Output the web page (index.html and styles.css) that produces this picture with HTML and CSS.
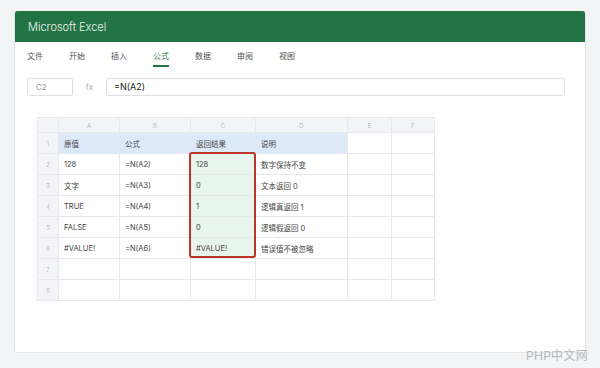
FILE: index.html
```html
<!DOCTYPE html>
<html lang="zh">
<head>
  <meta charset="UTF-8" />
  <title>Microsoft Excel - N函数</title>
  <link rel="stylesheet" href="styles.css">
</head>
<body>

  <div class="window">
    <div class="titlebar">Microsoft Excel</div>

    <!-- Ribbon tabs -->
    <div class="tabs">
      <span class="tab">文件</span>
      <span class="tab">开始</span>
      <span class="tab">插入</span>
      <span class="tab active">公式</span>
      <span class="tab">数据</span>
      <span class="tab">审阅</span>
      <span class="tab">视图</span>
    </div>

    <!-- Formula bar -->
    <div class="formula-bar">
      <div class="name-box">C2</div>
      <div class="fx">fx</div>
      <div class="formula-input">=N(A2)</div>
    </div>

    <div class="sheet">
      <table class="grid">
        <colgroup>
          <col class="c-num"><col class="c-a"><col class="c-b"><col class="c-c"><col class="c-d"><col class="c-e"><col class="c-f">
        </colgroup>
        <tr class="col-head">
          <th></th><th>A</th><th>B</th><th>C</th><th>D</th><th>E</th><th>F</th>
        </tr>
        <tr class="title-row">
          <th>1</th><td>原值</td><td>公式</td><td>返回结果</td><td>说明</td><td class="plain"></td><td class="plain"></td>
        </tr>
        <tr>
          <th>2</th><td>128</td><td>=N(A2)</td><td class="result">128</td><td>数字保持不变</td><td></td><td></td>
        </tr>
        <tr>
          <th>3</th><td>文字</td><td>=N(A3)</td><td class="result">0</td><td>文本返回 0</td><td></td><td></td>
        </tr>
        <tr>
          <th>4</th><td>TRUE</td><td>=N(A4)</td><td class="result">1</td><td>逻辑真返回 1</td><td></td><td></td>
        </tr>
        <tr>
          <th>5</th><td>FALSE</td><td>=N(A5)</td><td class="result">0</td><td>逻辑假返回 0</td><td></td><td></td>
        </tr>
        <tr>
          <th>6</th><td>#VALUE!</td><td>=N(A6)</td><td class="result">#VALUE!</td><td>错误值不被忽略</td><td></td><td></td>
        </tr>
        <tr>
          <th>7</th><td></td><td></td><td></td><td></td><td></td><td></td>
        </tr>
        <tr>
          <th>8</th><td></td><td></td><td></td><td></td><td></td><td></td>
        </tr>
      </table>
      <!-- highlight around C2:C6 -->
      <div class="highlight"></div>
    </div>
  </div>

  <div class="watermark">PHP中文网</div>

</body>
</html>
```

FILE: styles.css
```css
/* General styling */
body {
  font-family: 'Inter', 'Noto Sans CJK SC', sans-serif;
  margin: 0;
  padding: 0;
  background: #f3f4f6;
  color: #333;
  overflow: hidden;
}

.window {
  margin: 11px 14px 0;
  height: 342px;
  box-sizing: border-box;
  background: #fff;
  border: 1px solid #e2e4e7;
  border-top: none;
  border-radius: 3px;
  overflow: hidden;
}

.titlebar {
  height: 31px;
  box-sizing: border-box;
  padding: 2px 0 0 13px;
  background: #237445;
  color: #eef5f0;
  font-size: 11px;
  font-weight: 300;
  line-height: 29px;
}

/* Ribbon tabs */
.tabs {
  display: flex;
  gap: 26px;
  padding: 9px 0 0 12px;
  height: 27px;
  box-sizing: border-box;
}

.tab {
  font-size: 8px;
  color: #555;
  line-height: 11px;
  width: 16px;
  height: 16px;
  box-sizing: border-box;
  white-space: nowrap;
}

.tab.active {
  color: #2d7a4c;
  border-bottom: 2px solid #237445;
}

/* Formula bar */
.formula-bar {
  display: flex;
  align-items: center;
  margin-top: 9px;
  padding: 0 20px 0 12px;
  height: 18px;
}

.name-box {
  width: 46px;
  height: 18px;
  box-sizing: border-box;
  border: 1px solid #dcdfe3;
  border-radius: 2px;
  font-size: 8px;
  color: #999;
  line-height: 16px;
  padding-left: 8px;
}

.fx {
  width: 33px;
  font-size: 8px;
  color: #aaa;
  text-align: center;
}

.formula-input {
  flex: 1;
  height: 18px;
  box-sizing: border-box;
  border: 1px solid #dcdfe3;
  border-radius: 2px;
  font-size: 9px;
  color: #222;
  line-height: 16px;
  padding-left: 7px;
}

/* Sheet */
.sheet {
  position: relative;
  margin: 21px 0 0 22px;
  width: 398px;
}

.grid {
  border-collapse: collapse;
  table-layout: fixed;
  width: 397px;
  font-size: 7.5px;
}

.c-num { width: 21px; }
.c-a { width: 61px; }
.c-b { width: 71px; }
.c-c { width: 65px; }
.c-d { width: 92px; }
.c-e { width: 44px; }
.c-f { width: 43px; }

.grid td,
.grid th {
  border: 1px solid #e6e8eb;
  height: 20px;
  padding: 0 0 0 5px;
  text-align: left;
  font-weight: normal;
  white-space: nowrap;
  color: #444;
}

.grid th {
  background: #f2f4f7;
  color: #aaa;
  font-size: 6px;
  font-weight: 300;
  text-align: center;
  padding: 0;
}

.col-head th {
  height: 14px;
}

.title-row td {
  background: #dde9f8;
}

.title-row td.plain {
  background: #fff;
}

.grid td.result {
  background: #e8f5ec;
}

.highlight {
  position: absolute;
  left: 152px;
  top: 35px;
  width: 67px;
  height: 106px;
  box-sizing: border-box;
  border: 2px solid #b9342b;
  border-radius: 3px;
}

.watermark {
  position: absolute;
  right: 12px;
  bottom: 5px;
  font-size: 12px;
  color: #b5b8bc;
  letter-spacing: 0.3px;
}
```
